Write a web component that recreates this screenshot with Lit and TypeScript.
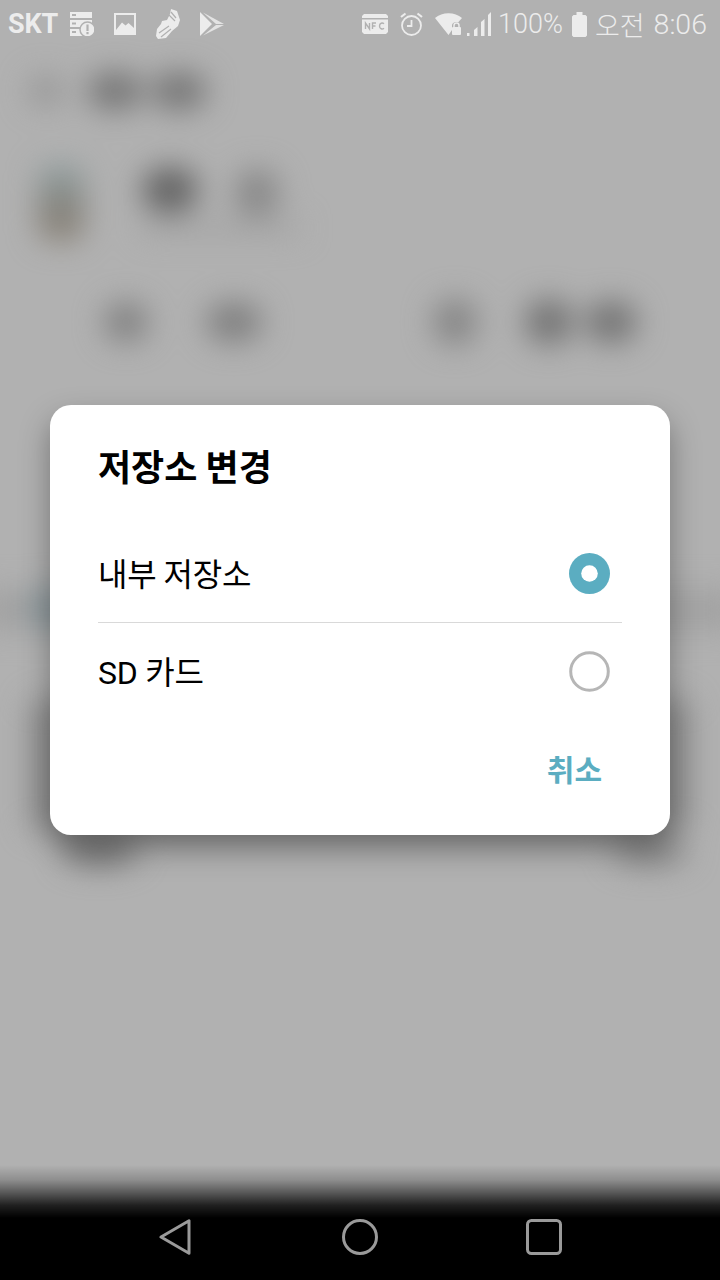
import { LitElement, html, css } from "lit";
import { customElement } from "lit/decorators.js";

@customElement("app-root")
export class AppRoot extends LitElement {
  static styles = css`
    :host {
      display: flex;
      flex-direction: column;
      width: 720px;
      height: 1280px;
      overflow: hidden;
      background: #b1b1b1;
      font-family: "Noto Sans CJK KR", Roboto, sans-serif;
    }
    .stage { flex: 1; display: grid; min-height: 0; margin-bottom: -115px; }
    .stage > * { grid-area: 1 / 1; min-width: 0; }

    /* dimmed page behind the dialog */
    .back { filter: blur(15px); padding-top: 48px; overflow: hidden; margin: 0 -20px; }
    .strip { display: flex; align-items: center; }
    .blob { border-radius: 50%; flex: none; }
    .r1 { height: 36px; margin: 25px 0 0 49px; }
    .r1 .a { width: 34px; height: 30px; background: #949494; }
    .r1 .b { width: 56px; height: 38px; background: #747474; margin-left: 24px; }
    .r1 .b + .b { margin-left: 8px; }
    .r2 { height: 84px; margin: 52px 0 0 58px; }
    .photo { width: 46px; height: 76px; border-radius: 14px; background: linear-gradient(#8f9fa1, #84817a 60%, #8c8478); }
    .r2 .c { width: 56px; height: 46px; background: #626262; margin: -26px 0 0 58px; }
    .r2 .d { width: 44px; height: 48px; background: #878787; margin: -20px 0 0 37px; }
    .sub { height: 14px; width: 160px; margin: -24px 0 0 160px; background: #a2a2a2; }
    .r3 { height: 44px; margin: 65px 0 0 0; }
    .r3 .e { width: 44px; height: 40px; background: #808080; margin-left: 124px; }
    .r3 .f { width: 56px; height: 40px; background: #7e7e7e; margin-left: 58px; }
    .r3 .g { width: 44px; height: 46px; background: #848484; margin-left: 171px; }
    .r3 .h { width: 48px; height: 46px; background: #727272; margin-left: 48px; }
    .r3 .i { width: 52px; height: 42px; background: #727272; margin-left: 12px; }
    .band { height: 40px; margin-top: 246px; background: #a2a2a2; }
    .tint { width: 40px; height: 44px; margin: -44px 0 0 50px; background: #87959a; }
    .card { height: 130px; margin: 70px 50px 0; background: #8c8c8c; border-radius: 8px; }
    .foot { display: flex; justify-content: space-between; padding: 0 52px 0 82px; margin-top: 8px; }
    .foot .blob { width: 76px; height: 28px; background: #767676; }
    .foot .blob + .blob { background: #868686; }

    .dialog {
      position: relative;
      align-self: start;
      justify-self: start;
      width: 620px;
      height: 430px;
      margin: 405px 0 0 50px;
      border-radius: 21px;
      background: #fff;
      color: #000;
      display: flex;
      flex-direction: column;
      box-shadow: 0 14px 30px rgba(0, 0, 0, 0.34);
    }
    .title {
      height: 120px;
      box-sizing: border-box;
      padding: 34px 0 0 48px;
      font-size: 36px;
      line-height: 52px;
      font-weight: 700;
    }
    .row {
      display: flex;
      align-items: center;
      justify-content: space-between;
      height: 97px;
      margin: 0 48px;
      padding-right: 12px;
      font-size: 32px;
    }
    .row + .row { border-top: 1px solid #d9d9d9; }
    .row span { margin-bottom: 3px; letter-spacing: -0.2px; }
    .row .latin { font-family: Roboto, "Noto Sans CJK KR", sans-serif; margin-bottom: 4px; }
    .radio { width: 41px; height: 41px; flex: none; display: block; }
    .actions {
      flex: 1;
      display: flex;
      justify-content: flex-end;
      padding: 26px 68px 0 0;
      color: #5badc1;
      font-size: 30px;
      line-height: 44px;
      font-weight: 700;
    }

    /* status bar */
    .status {
      position: relative;
      flex: none;
      height: 48px;
      display: flex;
      align-items: center;
      justify-content: space-between;
      padding: 0 13px 0 8px;
      color: #ececec;
      margin-bottom: -48px;
      font-family: Roboto, sans-serif;
      font-size: 27px;
    }
    .group { display: flex; align-items: center; }
    .group svg { display: block; flex: none; }
    .skt { font-weight: 700; font-size: 27px; letter-spacing: -0.2px; margin-right: 12px; }
    .gap20 { margin-right: 20px; }
    .gap12 { margin-right: 12px; }
    .gap5 { margin-right: 5px; }
    .gap7 { margin-right: 7px; }
    .gap8 { margin-right: 8px; }
    .gap9 { margin-right: 9px; }
    .pct { font-weight: 300; }
    .clock { font-weight: 300; display: flex; align-items: center; gap: 9px; font-size: 28.5px; }
    .clock .ko { font-family: "Noto Sans CJK KR", sans-serif; font-weight: 300; font-size: 27px; }

    /* navigation bar */
    .nav {
      position: relative;
      flex: none;
      height: 115px;
      box-sizing: border-box;
      padding: 0 0 0 157px;
      background: linear-gradient(
        rgba(0, 0, 0, 0),
        rgba(0, 0, 0, 0.2) 13%,
        rgba(0, 0, 0, 0.5) 24%,
        rgba(0, 0, 0, 0.82) 35%,
        #000 46%
      );
      display: flex;
      align-items: flex-start;
    }
    .nav svg { display: block; flex: none; margin-top: 54px; }
    .nav .home { margin-left: 149px; }
    .nav .recent { margin-left: 148px; }
  `;

  render() {
    return html`
      <div class="status">
        <div class="group">
          <span class="skt">SKT</span>
          <svg class="gap20" width="24" height="24" viewBox="0 0 24 24" fill="#ececec">
            <rect x="0" y="0" width="22" height="6" />
            <rect x="0" y="8" width="22" height="7" />
            <rect x="0" y="17" width="13" height="7" />
            <rect x="2" y="2" width="4" height="2" fill="#b1b1b1" />
            <rect x="2" y="10.5" width="4" height="2" fill="#b1b1b1" />
            <rect x="2" y="19" width="4" height="2" fill="#b1b1b1" />
            <circle cx="17.5" cy="17.5" r="7.5" stroke="#b1b1b1" stroke-width="1.5" />
            <rect x="16.4" y="12.5" width="2.2" height="6.5" fill="#b1b1b1" />
            <rect x="16.4" y="20" width="2.2" height="2.2" fill="#b1b1b1" />
          </svg>
          <svg class="gap20" width="22" height="22" viewBox="0 0 22 22">
            <path fill="#ececec" fill-rule="evenodd" d="M0 0H22V22H0ZM2 2V20H20V2Z" />
            <path fill="#ececec" d="M2 17 8 9.5 11.5 12.5 14.5 10 20 15V20H2Z" />
          </svg>
          <svg class="gap20" width="24" height="30" viewBox="0 0 24 30" fill="#ececec">
            <path d="M15 0 21 2 24 11 22 17 16 22 10 29 2 30 0 27 1 20 5 15 6 12 11 11 14 5Z" />
            <path d="M15 3 20 9M13 6 19 12M3 24 13 17M5 28 15 20" stroke="#b1b1b1" stroke-width="1.2" fill="none" />
          </svg>
          <svg width="24" height="24" viewBox="0 0 24 24" fill="#ececec">
            <path d="M0 0 12 12 0 24Z" />
            <path d="M3 .5 24 12 16 12Z" opacity=".85" />
            <path d="M3 23.500 24 13 16 13Z" opacity=".85" />
          </svg>
        </div>
        <div class="group">
          <svg class="gap12" width="26" height="20" viewBox="0 0 26 20">
            <path fill="#ececec" d="M2 0H24L26 2V18L24 20H2L0 18V2Z" />
            <rect x="0" y="4" width="26" height="1.5" fill="#b1b1b1" />
            <path fill="none" stroke="#b1b1b1" stroke-width="1.4" d="M3.5 15V9L7.5 15V9M10.5 15V9H14M10.5 12H13.5M22 9.8C20.5 8.5 17.5 8.8 17.5 12 17.5 15.2 20.5 15.5 22 14.2" />
          </svg>
          <svg class="gap12" width="23" height="24" viewBox="0 0 23 24" fill="none" stroke="#ececec">
            <circle cx="11.5" cy="13.5" r="9.5" stroke-width="1.8" />
            <path d="M11.5 8V14H7" stroke-width="1.8" />
            <path d="M1 5 5.5 1.5M22 5 17.5 1.5" stroke-width="2.2" />
          </svg>
          <svg class="gap5" width="27" height="22" viewBox="0 0 27 22">
            <path fill="#ececec" d="M0 5C7 -1.500 20 -1.500 27 5L23 9.500C21 8.500 18 9 17 12V17L13.500 22Z" />
            <rect x="17" y="14" width="9" height="8" rx="1" fill="#ececec" />
            <path d="M19 14.500V12.500A2.500 2.500 0 0 1 24 12.500V14.500" stroke="#ececec" stroke-width="1.500" fill="none" />
          </svg>
          <svg class="gap7" width="24" height="24" viewBox="0 0 24 24" fill="#ececec">
            <rect x="0" y="21" width="2.500" height="3" />
            <path d="M7 18 10.500 15V24H7Z" />
            <path d="M14 10 17.500 7V24H14Z" />
            <path d="M21 3 24 0V24H21Z" />
          </svg>
          <span class="pct gap9">100%</span>
          <svg class="gap8" width="15" height="25" viewBox="0 0 15 25" fill="#ececec">
            <path d="M4.500 0H10.500V3H13.500L15 4.500V23.500L13.500 25H1.500L0 23.500V4.500L1.500 3H4.500Z" />
          </svg>
          <span class="clock"><span class="ko">오전</span><span>8:06</span></span>
        </div>
      </div>

      <div class="stage">
        <div class="back">
          <div class="strip r1">
            <div class="blob a"></div>
            <div class="blob b"></div>
            <div class="blob b"></div>
          </div>
          <div class="strip r2">
            <div class="photo"></div>
            <div class="blob c"></div>
            <div class="blob d"></div>
          </div>
          <div class="sub"></div>
          <div class="strip r3">
            <div class="blob e"></div>
            <div class="blob f"></div>
            <div class="blob g"></div>
            <div class="blob h"></div>
            <div class="blob i"></div>
          </div>
          <div class="band"></div>
          <div class="blob tint"></div>
          <div class="card"></div>
          <div class="foot">
            <div class="blob"></div>
            <div class="blob"></div>
          </div>
        </div>

        <div class="dialog">
          <div class="title">저장소 변경</div>
          <div class="row">
            <span>내부 저장소</span>
            <svg class="radio" viewBox="0 0 41 41">
              <circle cx="20.500" cy="20.500" r="20.500" fill="#5badc1" />
              <circle cx="20.500" cy="20.500" r="8.300" fill="#fff" />
            </svg>
          </div>
          <div class="row">
            <span class="latin">SD 카드</span>
            <svg class="radio" viewBox="0 0 41 41">
              <circle cx="20.500" cy="20.500" r="18.800" fill="none" stroke="#b6b6b6" stroke-width="3" />
            </svg>
          </div>
          <div class="actions">취소</div>
        </div>
      </div>

      <div class="nav">
        <svg width="36" height="36" viewBox="0 0 36 36" fill="none" stroke="#9a9a9a" stroke-width="3" stroke-linejoin="round">
          <path d="M4 18 32 1.800V34.200Z" />
        </svg>
        <svg class="home" width="36" height="36" viewBox="0 0 36 36" fill="none" stroke="#9a9a9a" stroke-width="3">
          <circle cx="18" cy="18" r="16.500" />
        </svg>
        <svg class="recent" width="36" height="36" viewBox="0 0 36 36" fill="none" stroke="#9a9a9a" stroke-width="3">
          <rect x="1.500" y="1.500" width="33" height="33" rx="4" />
        </svg>
      </div>
    `;
  }
}
